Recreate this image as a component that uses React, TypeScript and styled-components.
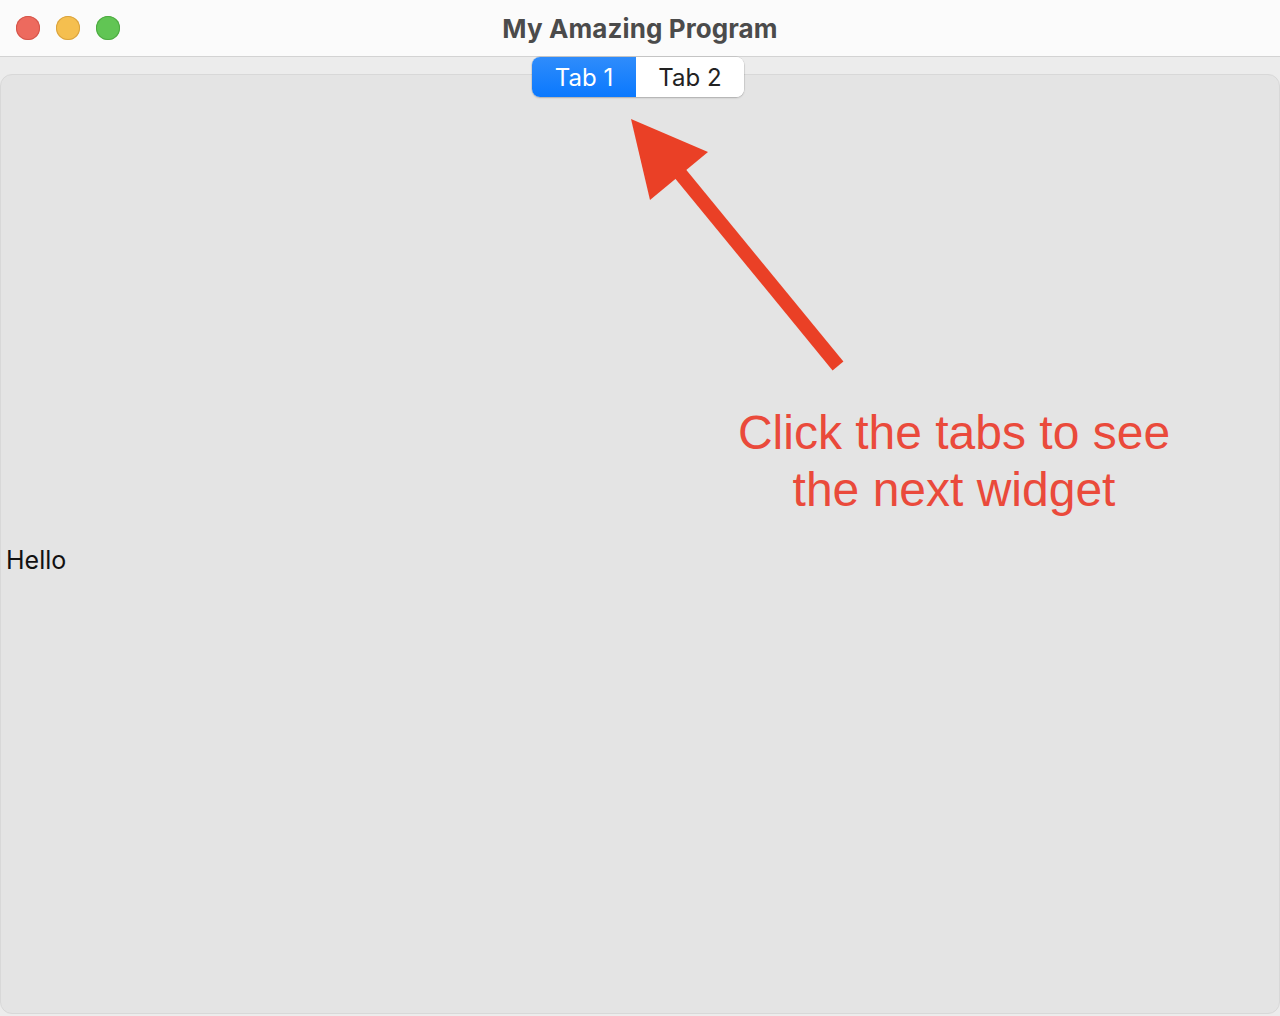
import React from 'react';
import styled, { createGlobalStyle } from 'styled-components';

const GlobalStyle = createGlobalStyle`
  html, body {
    margin: 0;
    padding: 0;
    background: #ececec;
  }
  #root {
    width: 1280px;
    height: 1016px;
  }
`;

const Window = styled.div`
  position: relative;
  width: 1280px;
  height: 1016px;
  display: flex;
  flex-direction: column;
  background: #ececec;
  overflow: hidden;
  font-family: Inter, "Liberation Sans", sans-serif;
`;

const TitleBar = styled.div`
  position: relative;
  height: 56px;
  flex: none;
  display: flex;
  align-items: center;
  justify-content: center;
  background: #fbfbfb;
  border-bottom: 1px solid #d3d3d3;
`;

const Lights = styled.div`
  position: absolute;
  left: 16px;
  top: 16px;
  display: flex;
  gap: 16px;
`;

const Light = styled.span<{ fill: string; edge: string }>`
  width: 24px;
  height: 24px;
  border-radius: 50%;
  background: ${({ fill }) => fill};
  box-shadow: inset 0 0 0 1px ${({ edge }) => edge};
`;

const Title = styled.h1`
  margin: 0;
  font-size: 26px;
  font-weight: 700;
  color: #4b4b4b;
  letter-spacing: 0.1px;
`;

const Body = styled.div`
  flex: 1;
  display: flex;
  flex-direction: column;
  align-items: center;
  padding-bottom: 2px;
`;

const Segmented = styled.div`
  position: relative;
  z-index: 1;
  display: flex;
  height: 40px;
  margin-right: 4px;
  border-radius: 8px;
  background: #ffffff;
  box-shadow: 0 0 0 0.5px rgba(0, 0, 0, 0.12), 0 1px 2px rgba(0, 0, 0, 0.2);
  overflow: hidden;
`;

const Segment = styled.div<{ active?: boolean }>`
  display: flex;
  align-items: center;
  justify-content: center;
  font-size: 24px;
  color: ${({ active }) => (active ? '#ffffff' : '#222222')};
  background: ${({ active }) => (active ? 'linear-gradient(#2f8cfb, #0a78fe)' : '#ffffff')};
  width: ${({ active }) => (active ? '104px' : '108px')};
`;

const Panel = styled.div`
  align-self: stretch;
  flex: 1;
  margin-top: -23px;
  padding-top: 23px;
  background: #e4e4e4;
  border: 1px solid #d8d8d8;
  border-radius: 12px;
  display: flex;
  align-items: center;
`;

const Hello = styled.span`
  margin-left: 5px;
  margin-top: 8px;
  font-size: 25px;
  color: #111111;
`;

const Note = styled.div`
  position: absolute;
  left: 700px;
  top: 404px;
  width: 508px;
  text-align: center;
  font-family: "Liberation Sans", Arial, sans-serif;
  font-size: 48px;
  line-height: 57px;
  color: #ea4a3b;
`;

const Arrow = styled.svg`
  position: absolute;
  left: 0;
  top: 0;
  pointer-events: none;
`;

const App: React.FC = () => (
  <>
    <GlobalStyle />
    <Window>
      <TitleBar>
        <Lights>
          <Light fill="#ed6a5e" edge="#d4564b" />
          <Light fill="#f5bf4f" edge="#d9a33f" />
          <Light fill="#61c554" edge="#4eaa42" />
        </Lights>
        <Title>My Amazing Program</Title>
      </TitleBar>
      <Body>
        <Segmented>
          <Segment active>Tab 1</Segment>
          <Segment>Tab 2</Segment>
        </Segmented>
        <Panel>
          <Hello>Hello</Hello>
        </Panel>
      </Body>
      <Arrow width="1280" height="1016" viewBox="0 0 1280 1016">
        <line x1="838" y1="366" x2="674" y2="166" stroke="#ea4026" strokeWidth="14" />
        <polygon points="631,119 708,152 650,200" fill="#ea4026" />
      </Arrow>
      <Note>
        Click the tabs to see
        <br />
        the next widget
      </Note>
    </Window>
  </>
);

export default App;
